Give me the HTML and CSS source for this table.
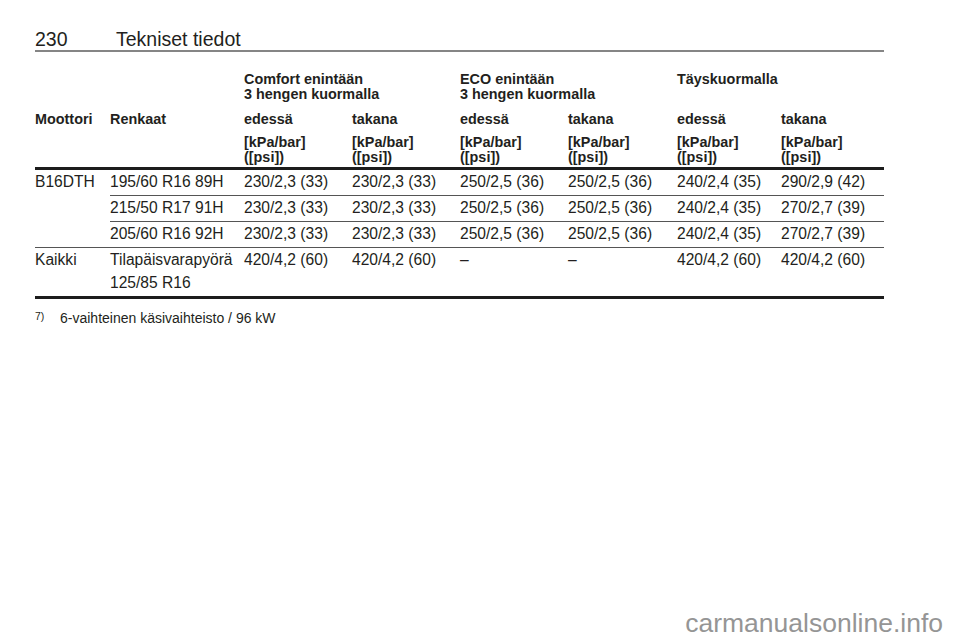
FILE: index.html
```html
<!DOCTYPE html>
<html lang="fi">
<head>
<meta charset="utf-8">
<title>230 Tekniset tiedot</title>
<link rel="stylesheet" href="styles.css">
</head>
<body>
<div class="page">
  <div class="title">
    <span class="page-no">230</span>
    <span class="chapter">Tekniset tiedot</span>
  </div>

  <table class="spec">
    <colgroup>
      <col class="c-engine">
      <col class="c-tyre">
      <col class="c-108">
      <col class="c-108">
      <col class="c-108">
      <col class="c-109">
      <col class="c-104">
      <col class="c-103">
    </colgroup>
    <thead>
      <tr class="h-group">
        <th></th>
        <th></th>
        <th colspan="2">Comfort enintään<br>3 hengen kuormalla</th>
        <th colspan="2">ECO enintään<br>3 hengen kuormalla</th>
        <th colspan="2">Täyskuormalla</th>
      </tr>
      <tr class="h-names">
        <th>Moottori</th>
        <th>Renkaat</th>
        <th>edessä</th>
        <th>takana</th>
        <th>edessä</th>
        <th>takana</th>
        <th>edessä</th>
        <th>takana</th>
      </tr>
      <tr class="h-units">
        <th></th>
        <th></th>
        <th>[kPa/bar]<br>([psi])</th>
        <th>[kPa/bar]<br>([psi])</th>
        <th>[kPa/bar]<br>([psi])</th>
        <th>[kPa/bar]<br>([psi])</th>
        <th>[kPa/bar]<br>([psi])</th>
        <th>[kPa/bar]<br>([psi])</th>
      </tr>
    </thead>
    <tbody>
      <tr>
        <td rowspan="3" class="engine">B16DTH</td>
        <td>195/60 R16 89H</td>
        <td>230/2,3 (33)</td>
        <td>230/2,3 (33)</td>
        <td>250/2,5 (36)</td>
        <td>250/2,5 (36)</td>
        <td>240/2,4 (35)</td>
        <td>290/2,9 (42)</td>
      </tr>
      <tr>
        <td>215/50 R17 91H</td>
        <td>230/2,3 (33)</td>
        <td>230/2,3 (33)</td>
        <td>250/2,5 (36)</td>
        <td>250/2,5 (36)</td>
        <td>240/2,4 (35)</td>
        <td>270/2,7 (39)</td>
      </tr>
      <tr>
        <td>205/60 R16 92H</td>
        <td>230/2,3 (33)</td>
        <td>230/2,3 (33)</td>
        <td>250/2,5 (36)</td>
        <td>250/2,5 (36)</td>
        <td>240/2,4 (35)</td>
        <td>270/2,7 (39)</td>
      </tr>
      <tr class="last">
        <td>Kaikki</td>
        <td><div>Tilapäisvarapyörä</div><div class="second">125/85 R16</div></td>
        <td>420/4,2 (60)</td>
        <td>420/4,2 (60)</td>
        <td>–</td>
        <td>–</td>
        <td>420/4,2 (60)</td>
        <td>420/4,2 (60)</td>
      </tr>
    </tbody>
  </table>

  <div class="footnote">
    <span class="fn-mark">7)</span>
    <span class="fn-text">6-vaihteinen käsivaihteisto / 96 kW</span>
  </div>
</div>
<div class="watermark">carmanualsonline.info</div>
</body>
</html>
```

FILE: styles.css
```css
html, body {
  margin: 0;
  padding: 0;
  background: #ffffff;
}

body {
  width: 960px;
  height: 642px;
  position: relative;
  overflow: hidden;
  font-family: "Liberation Sans", Arial, sans-serif;
  color: #231f20;
}

.page {
  padding: 28px 0 0 35px;
  width: 849px;
}

.title {
  display: flex;
  font-size: 19.5px;
  line-height: 22px;
  border-bottom: 2px solid #858585;
}

.page-no {
  width: 81px;
}

.spec {
  margin-top: 19.5px;
  width: 849px;
  table-layout: fixed;
  border-collapse: separate;
  border-spacing: 0;
}

.c-engine { width: 75px; }
.c-tyre { width: 134px; }
.c-108 { width: 108px; }
.c-109 { width: 109px; }
.c-104 { width: 104px; }
.c-103 { width: 103px; }

.spec th {
  text-align: left;
  vertical-align: top;
  padding: 0;
  font-weight: bold;
  font-size: 14.4px;
  line-height: 15px;
  white-space: nowrap;
}

.h-names th {
  padding-top: 10px;
}

.h-units th {
  padding-top: 8px;
  padding-bottom: 2.5px;
  border-bottom: 3px solid #1c1c1c;
}

.spec td {
  text-align: left;
  vertical-align: top;
  padding: 3px 0 4px;
  font-size: 15.6px;
  line-height: 18px;
  white-space: nowrap;
  border-bottom: 1px solid #555555;
}

.spec tr.last td {
  padding-bottom: 4px;
  border-bottom: 3.5px solid #1c1c1c;
}

.second {
  margin-top: 5px;
}

.footnote {
  margin-top: 11px;
  display: flex;
  align-items: baseline;
  font-size: 14px;
  line-height: 17px;
}

.fn-mark {
  width: 25px;
  font-size: 10.5px;
  position: relative;
  top: -3px;
}

.watermark {
  position: absolute;
  right: 17px;
  bottom: 4px;
  font-size: 26.5px;
  line-height: 30px;
  color: #959595;
}
```
